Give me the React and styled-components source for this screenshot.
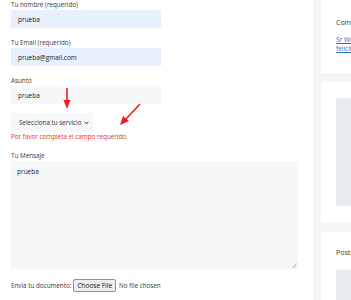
import React from "react";
import styled, { createGlobalStyle } from "styled-components";

const Global = createGlobalStyle`
  html, body { margin: 0; padding: 0; background: #f5f6f8; overflow: hidden; }
  body { font-family: "Open Sans", "Liberation Sans", sans-serif; }
`;

const Page = styled.div`
  display: flex;
  width: 351px;
  height: 300px;
  overflow: hidden;
  background: #f5f6f8;
`;

const Main = styled.div`
  position: relative;
  flex: 0 0 313px;
  background: #ffffff;
  padding: 0 0 0 11px;
  box-sizing: border-box;
`;

const Sidebar = styled.div`
  flex: 0 0 200px;
  margin-left: 8px;
  display: flex;
  flex-direction: column;
  gap: 9px;
`;

const Card = styled.div`
  background: #ffffff;
  height: ${(p) => p.$h}px;
  padding: ${(p) => p.$pt}px 0 0 15px;
  box-sizing: border-box;
  flex: 0 0 auto;
`;

const CardTitle = styled.div`
  font-size: 7px;
  line-height: 10px;
  color: #3a3a3a;
  white-space: nowrap;
`;

const CardLink = styled.a`
  display: block;
  font-size: 6.5px;
  line-height: 9px;
  color: #1e73be;
  text-decoration: underline;
  white-space: nowrap;
`;

const Placeholder = styled.div`
  background: #e9ecef;
  height: ${(p) => p.$h}px;
  margin-top: ${(p) => p.$mt}px;
`;

const Label = styled.div`
  font-size: 6.3px;
  line-height: 10px;
  color: #3a3a3a;
  margin-top: ${(p) => p.$mt || 0}px;
  white-space: nowrap;
`;

const Input = styled.div`
  width: 150px;
  height: 18px;
  box-sizing: border-box;
  padding-left: 7px;
  display: flex;
  align-items: center;
  font-size: 6.5px;
  color: #222;
  background: ${(p) => (p.$filled ? "#e8f0fe" : "#f6f7f8")};
`;

const Select = styled.div`
  width: 82px;
  height: 19px;
  margin-top: 9px;
  box-sizing: border-box;
  padding: 0 4px 0 8px;
  display: flex;
  align-items: center;
  justify-content: space-between;
  font-size: 6.3px;
  color: #333;
  white-space: nowrap;
  background: #f6f7f8;
`;

const Chevron = styled.svg`
  width: 5px;
  height: 4px;
`;

const Error = styled.div`
  font-size: 6.3px;
  line-height: 10px;
  color: #e2312d;
  white-space: nowrap;
`;

const TextArea = styled.div`
  position: relative;
  width: 287px;
  height: 108px;
  box-sizing: border-box;
  padding: 6px 6px;
  font-size: 6.5px;
  line-height: 10px;
  color: #222;
  background: #f6f7f8;
`;

const Grip = styled.svg`
  position: absolute;
  right: 1px;
  bottom: 1px;
  width: 5px;
  height: 5px;
`;

const FileRow = styled.div`
  margin-top: 10px;
  display: flex;
  align-items: center;
  gap: 2px;
  font-size: 6.3px;
  color: #3a3a3a;
  white-space: nowrap;
`;

const FileButton = styled.span`
  display: inline-flex;
  align-items: center;
  height: 13px;
  padding: 0 3px;
  box-sizing: border-box;
  border: 1px solid #8f8f9d;
  border-radius: 2px;
  background: #efefef;
  color: #111;
  font-size: 6.5px;
  margin-right: 1px;
`;

const Arrows = styled.svg`
  position: absolute;
  left: 0;
  top: 0;
  width: 313px;
  height: 300px;
  pointer-events: none;
`;

export default function App() {
  return (
    <>
      <Global />
      <Page>
        <Main>
          <Label>Tu nombre (requerido)</Label>
          <Input $filled>prueba</Input>
          <Label $mt={10}>Tu Email (requerido)</Label>
          <Input $filled>prueba@gmail.com</Input>
          <Label $mt={10}>Asunto</Label>
          <Input>prueba</Input>
          <Select>
            <span>Selecciona tu servicio</span>
            <Chevron viewBox="0 0 5 4">
              <path d="M0.6 0.8 L2.5 2.8 L4.4 0.8" fill="none" stroke="#333" strokeWidth="1" />
            </Chevron>
          </Select>
          <Error>Por favor completa el campo requerido.</Error>
          <Label $mt={9}>Tu Mensaje</Label>
          <TextArea>
            prueba
            <Grip viewBox="0 0 5 5">
              <path d="M4.5 0.5 L0.5 4.5 M4.5 2.5 L2.5 4.5" stroke="#999" strokeWidth="0.7" />
            </Grip>
          </TextArea>
          <FileRow>
            <span>Envia tu documento:</span>
            <FileButton>Choose File</FileButton>
            <span>No file chosen</span>
          </FileRow>
          <Arrows viewBox="0 0 313 300">
            <line x1="67" y1="88" x2="67" y2="101" stroke="#ee1c1c" strokeWidth="1.6" />
            <polygon points="63.5,100 70.5,100 67,109" fill="#ee1c1c" />
            <line x1="140" y1="104" x2="126" y2="119" stroke="#ee1c1c" strokeWidth="1.6" />
            <polygon points="120,125 123,116 129,121" fill="#ee1c1c" />
          </Arrows>
        </Main>
        <Sidebar>
          <Card $h={73} $pt={18}>
            <CardTitle>Comentarios recientes</CardTitle>
            <div style={{ height: 7 }} />
            <CardLink>Sr WordPress en ¡Hola mundo!</CardLink>
            <CardLink>felicitaciones</CardLink>
          </Card>
          <Card $h={141} $pt={16}>
            <Placeholder $h={108} $mt={0} />
          </Card>
          <Card $h={120} $pt={16}>
            <CardTitle>Posts recientes</CardTitle>
            <Placeholder $h={60} $mt={12} />
          </Card>
        </Sidebar>
      </Page>
    </>
  );
}
